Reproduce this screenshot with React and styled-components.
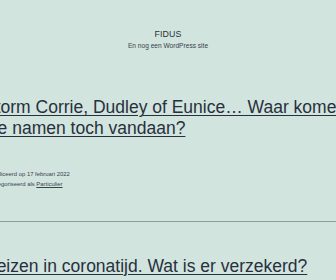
import styled, { createGlobalStyle } from "styled-components";

const GlobalStyle = createGlobalStyle`
  html, body {
    margin: 0;
    padding: 0;
    background: #d1e4dd;
    overflow: hidden;
  }
  body {
    font-family: "Liberation Sans", Arial, sans-serif;
    color: #28303d;
  }
`;

const posts = [
  {
    title: "Storm Corrie, Dudley of Eunice… Waar komen die namen toch vandaan?",
    date: "17 februari 2022",
    category: "Particulier",
  },
  {
    title: "Reizen in coronatijd. Wat is er verzekerd?",
  },
];

const App = () => {
  return (
    <Page>
      <GlobalStyle />
      <Header>
        <SiteTitle>FIDUS</SiteTitle>
        <Tagline>En nog een WordPress site</Tagline>
      </Header>
      <Main>
        {posts.map((post, i) => (
          <div key={i}>
            {i > 0 && <Separator />}
            <Article>
              <Title>
                <a href="#">{post.title}</a>
              </Title>
              {post.date && (
                <Meta>
                  <div>Gepubliceerd op {post.date}</div>
                  <div>
                    Gecategoriseerd als <a href="#">{post.category}</a>
                  </div>
                </Meta>
              )}
            </Article>
          </div>
        ))}
      </Main>
    </Page>
  );
};

const Page = styled.div`
  width: 336px;
  height: 280px;
  overflow: hidden;
  background: #d1e4dd;
`;

const Header = styled.header`
  padding-top: 29px;
  display: flex;
  flex-direction: column;
  align-items: center;
`;

const SiteTitle = styled.div`
  font-size: 8.8px;
  line-height: 11px;
  color: #28303d;
  letter-spacing: 0.15px;
`;

const Tagline = styled.div`
  margin-top: 1px;
  font-size: 6.6px;
  line-height: 9px;
  color: #39414d;
`;

const Main = styled.main`
  margin-top: 47px;
`;

/* the content column is wider than the window, so it runs off both sides */
const Article = styled.article`
  width: 370px;
  margin-left: -16px;
  padding-bottom: 32px;
`;

const Separator = styled.hr`
  margin: 0 0 34px;
  border: 0;
  border-top: 1px solid #8c9f98;
  width: 336px;
`;

const Title = styled.h2`
  margin: 0;
  font-size: 17.5px;
  line-height: 21px;
  font-weight: 400;
  a {
    color: #28303d;
    text-decoration: underline;
    text-decoration-thickness: 1px;
    text-underline-offset: 2px;
  }
`;

const Meta = styled.div`
  margin-top: 30px;
  margin-left: -2px;
  font-size: 5.9px;
  line-height: 10px;
  color: #3a424e;
  a {
    color: #3a424e;
    text-decoration: underline;
  }
`;

export default App;
